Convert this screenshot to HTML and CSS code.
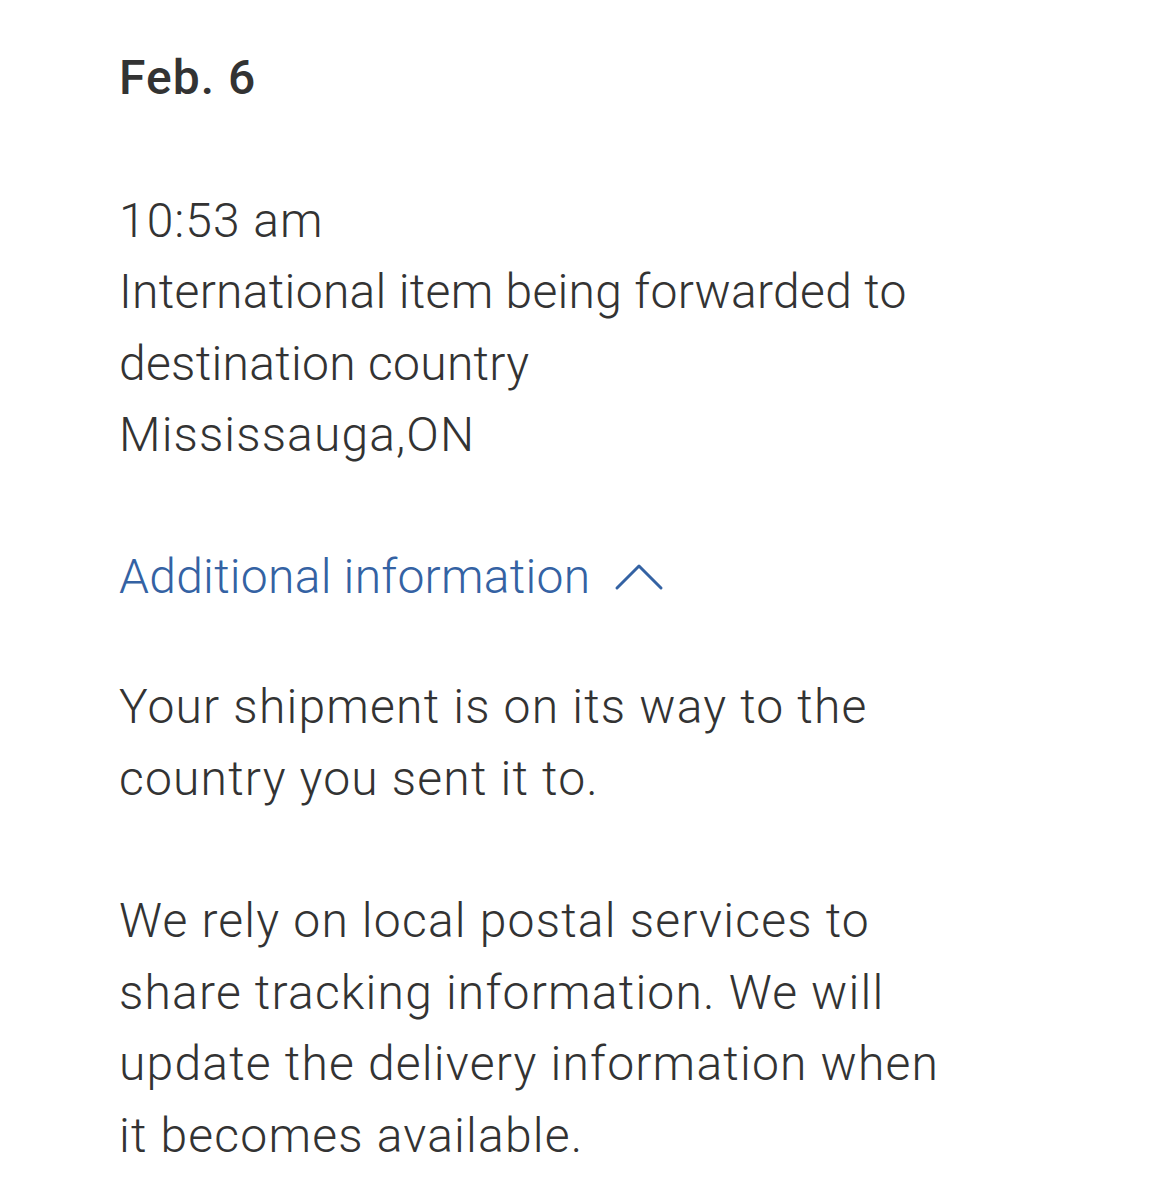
FILE: index.html
```html
<!DOCTYPE html>
<html>
<head>
<meta charset="utf-8">
<link rel="stylesheet" href="styles.css">
</head>
<body>
<main class="page">
  <h2 class="date">Feb. 6</h2>
  <section class="event">
    <div class="line time">10:53 am</div>
    <div class="line">International item being forwarded to destination country</div>
    <div class="line place">Mississauga,ON</div>
  </section>
  <button class="toggle">
    <span>Additional information</span>
    <svg class="chev" width="50" height="36" viewBox="0 0 50 36"><path d="M3 32 L25 10 L47 32" fill="none" stroke="#3462a3" stroke-width="3" stroke-linecap="round" stroke-linejoin="round"/></svg>
  </button>
  <p class="para">Your shipment is on its way to the country you sent it to.</p>
  <p class="para">We rely on local postal services to share tracking information. We will update the delivery information when it becomes available.</p>
</main>
</body>
</html>
```
FILE: styles.css
```css
html, body {
  margin: 0;
  padding: 0;
  background: #ffffff;
}
.page {
  padding: 42px 0 0 119px;
  width: 830px;
  font-family: Roboto, "Liberation Sans", sans-serif;
  font-size: 48px;
  line-height: 71.5px;
  color: #333333;
  font-weight: 300;
  letter-spacing: 0.3px;
}
.date {
  margin: 0;
  font-size: 48px;
  font-weight: 500;
  line-height: 71.5px;
  letter-spacing: 1px;
  color: #333333;
}
.event {
  margin-top: 71px;
}
.time {
  letter-spacing: 1px;
}
.place {
  letter-spacing: 1.1px;
}
.toggle {
  margin-top: 70px;
  display: flex;
  align-items: center;
  gap: 24px;
  background: none;
  border: 0;
  padding: 0;
  font: inherit;
  letter-spacing: 0.25px;
  color: #3462a3;
  line-height: 71.5px;
}
.chev {
  display: block;
  margin-top: -4px;
}
.para {
  margin: 59px 0 0 0;
  letter-spacing: 1.2px;
}
.para + .para {
  margin-top: 71px;
}
```
